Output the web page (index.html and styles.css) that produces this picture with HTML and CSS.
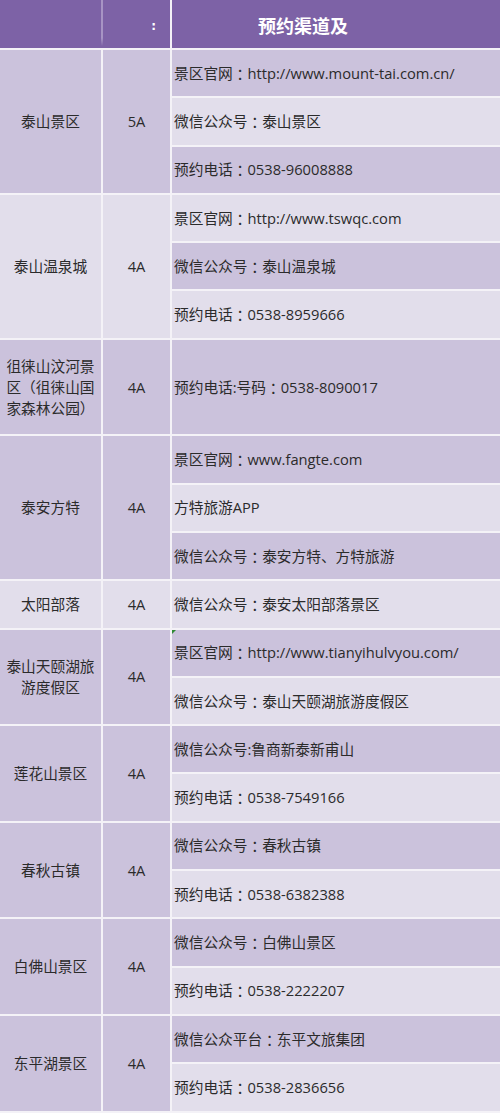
FILE: index.html
```html
<!DOCTYPE html>
<html lang="zh-CN">
<head>
<meta charset="utf-8">
<title>预约渠道</title>
<link rel="stylesheet" href="styles.css">
</head>
<body>
<div class="table">
  <div class="head head-left"><span class="head-mark">:</span></div>
  <div class="head head-main"><span class="head-title">预约渠道及</span></div>

  <div class="c1 dark s3">泰山景区</div>
  <div class="c2 dark s3">5A</div>
  <div class="c3 dark">景区官网<span class="colon">：</span>http://www.mount-tai.com.cn/</div>
  <div class="c3 light">微信公众号<span class="colon">：</span>泰山景区</div>
  <div class="c3 dark">预约电话<span class="colon">：</span>0538-96008888</div>

  <div class="c1 light s3">泰山温泉城</div>
  <div class="c2 light s3">4A</div>
  <div class="c3 light">景区官网<span class="colon">：</span>http://www.tswqc.com</div>
  <div class="c3 dark">微信公众号<span class="colon">：</span>泰山温泉城</div>
  <div class="c3 light">预约电话<span class="colon">：</span>0538-8959666</div>

  <div class="c1 dark s2">徂徕山汶河景区（徂徕山国家森林公园）</div>
  <div class="c2 dark s2">4A</div>
  <div class="c3 dark s2">预约电话:号码<span class="colon">：</span>0538-8090017</div>

  <div class="c1 dark s3">泰安方特</div>
  <div class="c2 dark s3">4A</div>
  <div class="c3 dark">景区官网<span class="colon">：</span>www.fangte.com</div>
  <div class="c3 light">方特旅游APP</div>
  <div class="c3 dark">微信公众号<span class="colon">：</span>泰安方特、方特旅游</div>

  <div class="c1 light">太阳部落</div>
  <div class="c2 light">4A</div>
  <div class="c3 light">微信公众号<span class="colon">：</span>泰安太阳部落景区</div>

  <div class="c1 dark s2">泰山天颐湖旅游度假区</div>
  <div class="c2 dark s2">4A</div>
  <div class="c3 dark marked">景区官网<span class="colon">：</span>http://www.tianyihulvyou.com/</div>
  <div class="c3 light">微信公众号<span class="colon">：</span>泰山天颐湖旅游度假区</div>

  <div class="c1 dark s2">莲花山景区</div>
  <div class="c2 dark s2">4A</div>
  <div class="c3 dark">微信公众号:鲁商新泰新甫山</div>
  <div class="c3 light">预约电话<span class="colon">：</span>0538-7549166</div>

  <div class="c1 dark s2">春秋古镇</div>
  <div class="c2 dark s2">4A</div>
  <div class="c3 dark">微信公众号<span class="colon">：</span>春秋古镇</div>
  <div class="c3 light">预约电话<span class="colon">：</span>0538-6382388</div>

  <div class="c1 dark s2">白佛山景区</div>
  <div class="c2 dark s2">4A</div>
  <div class="c3 dark">微信公众号<span class="colon">：</span>白佛山景区</div>
  <div class="c3 light">预约电话<span class="colon">：</span>0538-2222207</div>

  <div class="c1 dark s2">东平湖景区</div>
  <div class="c2 dark s2">4A</div>
  <div class="c3 dark">微信公众平台<span class="colon">：</span>东平文旅集团</div>
  <div class="c3 light">预约电话<span class="colon">：</span>0538-2836656</div>
</div>
</body>
</html>
```

FILE: styles.css
```css
html, body {
  margin: 0;
  padding: 0;
  background: #ffffff;
}

body {
  font-family: "Open Sans", "Noto Sans CJK SC", sans-serif;
  font-size: 14.7px;
  color: #2b2b2b;
}

.table {
  display: grid;
  grid-template-columns: 101px 67px 1fr;
  grid-template-rows: 48px repeat(22, 46.3px);
  gap: 2px;
  width: 500px;
  height: 1113px;
  overflow: hidden;
  background: #f4f2f7;
}

.head {
  background: #7d62a6;
  color: #ffffff;
  display: flex;
  align-items: center;
}

.head-left {
  grid-column: 1 / 3;
  justify-content: flex-end;
  padding-right: 14px;
  background:
    linear-gradient(to bottom, rgba(125, 98, 166, 0) 0, rgba(125, 98, 166, 0) 38px, #7d62a6 46px),
    linear-gradient(to right, #7d62a6 101px, #a794c4 101px, #a794c4 103px, #7d62a6 103px);
}

.head-mark {
  font-family: "DejaVu Sans", sans-serif;
  font-size: 12px;
  font-weight: bold;
  margin-top: 4px;
}

.head-main {
  grid-column: 3;
  padding-left: 86px;
}

.head-title {
  white-space: nowrap;
  font-family: "Noto Sans CJK SC", sans-serif;
  font-size: 18px;
  font-weight: bold;
  margin-top: 2px;
}

.c1, .c2, .c3 {
  display: flex;
  align-items: center;
  line-height: 21px;
}

.c1 {
  grid-column: 1;
  justify-content: center;
  text-align: center;
  padding: 0 5px;
}

.c2 {
  grid-column: 2;
  justify-content: center;
}

.c3 {
  grid-column: 3;
  padding-left: 2px;
  white-space: nowrap;
}

.colon {
  font-family: "Noto Sans CJK TC", sans-serif;
}

.s2 { grid-row: span 2; }
.s3 { grid-row: span 3; }

.dark { background: #cbc2dc; }
.light { background: #e2deeb; }

.marked {
  position: relative;
}

.marked::before {
  content: "";
  position: absolute;
  top: 0;
  left: 0;
  border-top: 4px solid #2f8a33;
  border-right: 4px solid transparent;
}
```
